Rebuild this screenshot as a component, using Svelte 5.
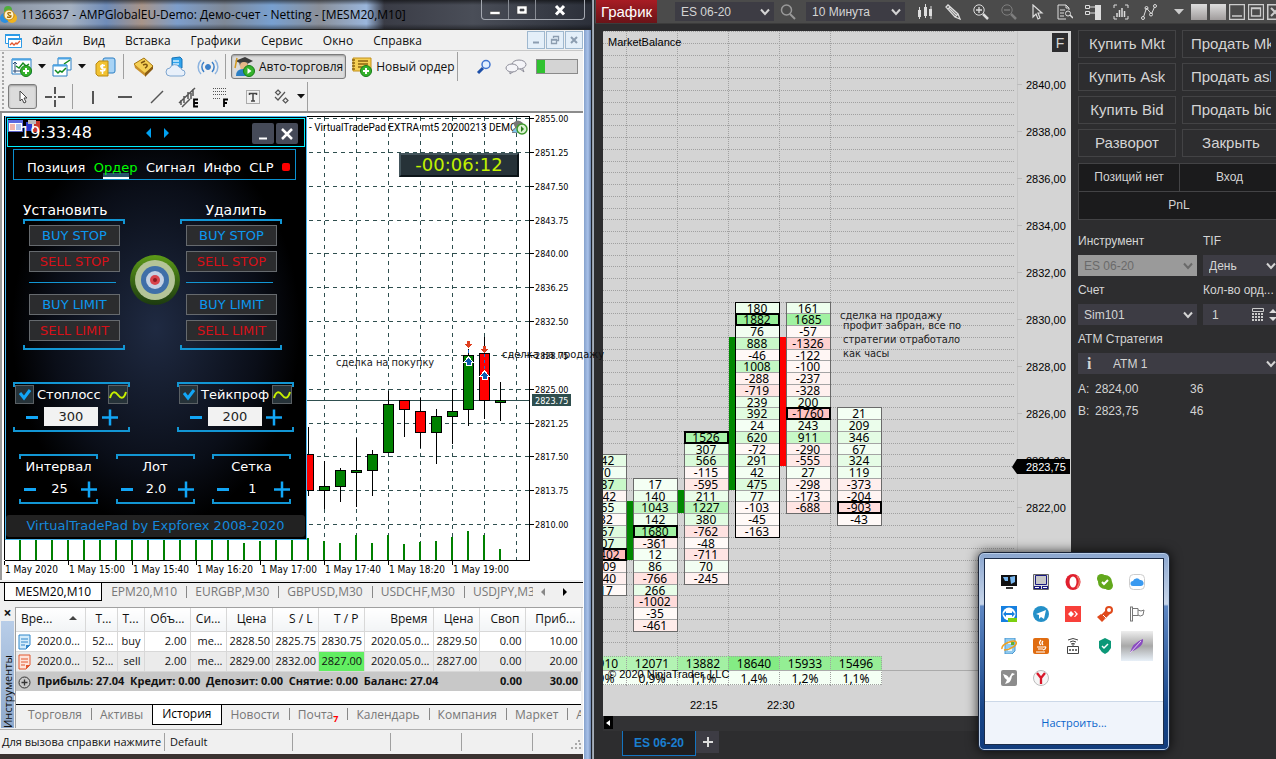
<script>
  const menu = ['Файл', 'Вид', 'Вставка', 'Графики', 'Сервис', 'Окно', 'Справка'];
  const symbols = ['EPM20,M10', 'EURGBP,M30', 'GBPUSD,M30', 'USDCHF,M30'];

  // price chart: [x, high, low, body top, body bottom, up]
  const candles = [
    [308, 427, 496, 454, 490, false],
    [324, 461, 509, 486, 490, true],
    [340, 468, 502, 470, 486, true],
    [356, 438, 507, 470, 472, true],
    [372, 450, 496, 454, 470, true],
    [388, 391, 452, 404, 452, true],
    [404, 400, 437, 400, 409, false],
    [420, 398, 448, 411, 432, false],
    [436, 409, 464, 416, 432, true],
    [452, 389, 444, 411, 416, true],
    [468, 349, 426, 355, 409, true],
    [484, 337, 419, 353, 400, false],
    [500, 382, 421, 400, 402, true]
  ];
  const volumes = [538, 538, 538, 538, 538, 538, 538, 538, 538, 538, 538, 538, 538, 538, 543, 541, 538, 538, 538, 541, 543, 535, 543, 535, 544, 542, 541, 537, 531, 535, 549];
  const gridY = [118, 152, 186, 220, 253, 287, 321, 355, 389, 423, 456, 490, 524];
  const gridX = [324, 356, 388, 420, 452, 484, 516];
  const times = ['1 May 2020', '1 May 15:00', '1 May 15:40', '1 May 16:20', '1 May 17:00', '1 May 17:40', '1 May 18:20', '1 May 19:00'];
  const priceAt = i => (2855 - i * 3.75).toFixed(2);

  const padTabs = ['Позиция', 'Ордер', 'Сигнал', 'Инфо', 'CLP'];
  const orderTypes = ['BUY STOP', 'SELL STOP', 'BUY LIMIT', 'SELL LIMIT'];
  const limits = [
    { name: 'Стоплосс', value: '300' },
    { name: 'Тейкпроф', value: '200' }
  ];
  const steppers = [
    { name: 'Интервал', value: '25' },
    { name: 'Лот', value: '2.0' },
    { name: 'Сетка', value: '1' }
  ];

  const head = ['Т...', 'Т...', 'Объ...', 'Си...', 'Цена', 'S / L', 'T / P', 'Время', 'Цена', 'Своп', 'Приб...'];
  const deals = [
    { color: '#2f86c9', fill: '#d4ecfb', cells: ['2020.0...', '52...', 'buy', '2.00', 'me...', '2828.50', '2825.75', '2830.75', '2020.05.0...', '2829.50', '0.00', '10.00'] },
    { color: '#e2562f', fill: '#fde3da', hit: true, cells: ['2020.0...', '52...', 'sell', '2.00', 'me...', '2829.00', '2832.00', '2827.00', '2020.05.0...', '2827.00', '0.00', '20.00'] }
  ];
  const colWidths = [69, 32, 27, 46, 36, 46, 46, 46, 69, 46, 46, 56];

  // footprint columns: x, first row index, values top to bottom, max row
  const clusters = [
    { x: 582, row: 36, max: 8, vals: [342, 70, 887, -142, 165, -32, 467, 407, -3402, -209, -340, -17] },
    { x: 633, row: 38, max: 4, vals: [17, 140, 1043, 142, 1680, -361, 12, 86, -766, 266, -1002, -35, -461] },
    { x: 684, row: 34, max: 0, vals: [1526, 307, 566, -115, -595, 211, 1227, 380, -762, -48, -711, 70, -245] },
    { x: 735, row: 23, max: 1, dark: true, vals: [180, 1882, 76, 888, -46, 1008, -288, -719, 239, 392, 24, 620, -72, 291, 42, 475, 77, -103, -45, -163] },
    { x: 786, row: 23, max: 9, vals: [161, 1685, -57, -1326, -122, -100, -237, -328, 200, -1760, 243, 911, -290, -555, 27, -298, -173, -688] },
    { x: 837, row: 32, max: 8, vals: [21, 209, 346, 67, 324, 119, -373, -204, -903, -43] }
  ];
  const moves = [
    { x: 627, from: 40, to: 45, color: '#080' },
    { x: 678, from: 39, to: 41, color: '#080' },
    { x: 729, from: 26, to: 39, color: '#080' },
    { x: 780, from: 26, to: 37, color: '#f00' }
  ];
  const totals = [
    { x: 575, v: '11910', p: '0,9%', c: '#b6f3b6' },
    { x: 626, v: '12071', p: '0,9%', c: '#b3f3b3' },
    { x: 677, v: '13882', p: '1,1%', c: '#a3f0a3' },
    { x: 728, v: '18640', p: '1,4%', c: '#84ec84' },
    { x: 779, v: '15933', p: '1,2%', c: '#94ee94' },
    { x: 830, v: '15496', p: '1,1%', c: '#97ee97' }
  ];
  const rowY = k => Math.round(31.3 + k * 11.75);
  const rows = Array.from({ length: 53 }, (_, k) => rowY(k));
  const prices = Array.from({ length: 10 }, (_, k) => ({ y: 85 + k * 47, text: `${2840 - k * 2},00` }));

  function heat(v) {
    const t = Math.min(1, Math.abs(v) / 2000);
    if (v > 0) return `rgb(${245 - 100 * t}, ${255 - 16 * t}, ${245 - 100 * t})`;
    return `rgb(255, ${250 - 62 * t}, ${248 - 60 * t})`;
  }

  const orderButtons = ['Купить Mkt', 'Продать Mkt', 'Купить Ask', 'Продать ask', 'Купить Bid', 'Продать bid', 'Разворот', 'Закрыть'];
</script>

{#snippet chevron()}
  <svg class="chev" width="10" height="8" viewBox="0 0 10 8"><path d="M1 1.5 5 6l4-4.5" fill="none" stroke="currentColor" stroke-width="2" /></svg>
{/snippet}

{#snippet caret()}
  <svg class="caret" width="8" height="5" viewBox="0 0 8 5"><path d="M0 0h8L4 4.5z" fill="#111" /></svg>
{/snippet}

{#snippet minus()}
  <button class="pm" aria-label="Меньше"><svg width="18" height="18" viewBox="0 0 18 18"><path d="M3 9.5h12" stroke="#12a6f6" stroke-width="3" /></svg></button>
{/snippet}

{#snippet plus()}
  <button class="pm" aria-label="Больше"><svg width="18" height="18" viewBox="0 0 18 18"><path d="M1 9.5h16M9 1.500v16" stroke="#12a6f6" stroke-width="2.500" /></svg></button>
{/snippet}

<div class="desktop">
  <section class="mt">
    <header class="titlebar">
      <svg width="17" height="18" viewBox="0 0 17 18"><circle cx="8" cy="4" r="4" fill="#4fae3c" /><circle cx="5" cy="12" r="5" fill="#2b8fe0" /><circle cx="12" cy="12" r="5" fill="#f0b21e" /><circle cx="9" cy="9" r="5" fill="#fff2c8" stroke="#c98a12" /><path d="M11 7q-4-1-3 1t3 2q0 2-4 1" fill="none" stroke="#a66a00" stroke-width="1.300" /></svg>
      <h1>1136637 - AMPGlobalEU-Demo: Демо-счет - Netting - [MESM20,M10]</h1>
      <div class="caption">
        <button aria-label="Свернуть"><svg width="12" height="12" viewBox="0 0 12 12"><path d="M1 7.500h10v3H1z" fill="#fff" stroke="#444" stroke-width=".6" /></svg></button>
        <button aria-label="Развернуть"><svg width="12" height="12" viewBox="0 0 12 12"><path d="M1 2h10v8H1zM4 5v2h4V5z" fill="#fff" fill-rule="evenodd" stroke="#444" stroke-width=".6" /></svg></button>
        <button class="wide" aria-label="Закрыть"><svg width="14" height="12" viewBox="0 0 14 12"><path d="m3 2 8 8.500M11 2l-8 8.500" stroke="#fff" stroke-width="3" /></svg></button>
      </div>
    </header>

    <nav class="menubar">
      <svg width="17" height="17" viewBox="0 0 17 17"><path d="M.5 2.500h14v9H.5z" fill="#fff" stroke="#2e9be6" /><path d="M0 2h15v2H0z" fill="#2e9be6" /><path d="M3.500 6.500h13v9h-13z" fill="#fff" stroke="#2e9be6" /><path d="M3 6h14v2H3z" fill="#2e9be6" /><path d="m5 13 2-2 2 2 2-2 1 1 3-3" fill="none" stroke="#e2562f" stroke-width="1.300" /></svg>
      {#each menu as item}
        <button>{item}</button>
      {/each}
      <div class="mdi">
        <button aria-label="Свернуть окно"><svg width="10" height="10" viewBox="0 0 10 10"><path d="M2 7.500h6" stroke="#8c9db0" stroke-width="2" /></svg></button>
        <button aria-label="Восстановить окно"><svg width="10" height="10" viewBox="0 0 10 10"><path d="M3.500 3V1.500h5v4H7M1.500 4.500h5v4h-5zM1 5h6" fill="none" stroke="#8c9db0" stroke-width="1.300" /></svg></button>
        <button aria-label="Закрыть окно"><svg width="10" height="10" viewBox="0 0 10 10"><path d="m2 2 6 6M8 2 2 8" stroke="#8c9db0" stroke-width="2" /></svg></button>
      </div>
    </nav>

    <div class="toolbar">
      <button class="tool drop" aria-label="Новый график">
        <svg width="22" height="22" viewBox="0 0 22 22"><path d="M1 3h19v15H1z" fill="#fff" stroke="#2b7fc4" /><path d="M1 2.500h19v2H1z" fill="#4da4e4" /><path d="M4 17V6m-2 2 2-2 2 2M2 15h14" fill="none" stroke="#2a4d78" /><path d="m5 10 3 2 4-5 3 3 3-2" fill="none" stroke="#128a1c" stroke-width="1.500" /><circle cx="15" cy="15" r="5.500" fill="#35b22c" stroke="#167d18" /><path d="M15 12v6M12 15h6" stroke="#fff" stroke-width="2" /></svg>
        {@render caret()}
      </button>
      <button class="tool drop" aria-label="Профили">
        <svg width="22" height="22" viewBox="0 0 22 22"><path d="M7 2h13v12H7z" fill="#fff" stroke="#2b7fc4" /><path d="M7 1.500h13v2H7z" fill="#4da4e4" /><path d="m13 8 3-2 3-2" fill="none" stroke="#128a1c" stroke-width="1.500" /><path d="M2 9h14v11H2z" fill="#fff" stroke="#2b7fc4" /><path d="M2 8.500h14v2H2z" fill="#4da4e4" /><path d="m4 14 3 3 2-2 2 1 4-4" fill="none" stroke="#128a1c" stroke-width="1.500" /></svg>
        {@render caret()}
      </button>
      <button class="tool" aria-label="Обзор рынка">
        <svg width="22" height="22" viewBox="0 0 22 22"><rect x="8" y="2" width="12" height="15" rx="2" fill="#a8d3f5" stroke="#2b7fc4" /><path d="m1 8 3-3h9v15H3l-2-2z" fill="#f1c232" stroke="#b98a12" /><path d="M10 9.500q-5-1-4 1.500t4 2q0 3-5 1.500M7.500 8v10" fill="none" stroke="#fff" stroke-width="1.500" /></svg>
      </button>
      <span class="sep"></span>
      <button class="tool" aria-label="История">
        <svg width="22" height="22" viewBox="0 0 22 22"><path d="m1 8 10-6 9 8-8 9z" fill="#f5cf55" stroke="#a67610" /><path d="m1 8 11 9v3L2 12z" fill="#c9912a" /><path d="m12 17 8-7v3l-8 8z" fill="#8b5d14" /><path d="m8 7 4-2m-2 4c4-2 6 1 2 3" fill="none" stroke="#7d5510" stroke-width="1.500" /></svg>
      </button>
      <button class="tool" aria-label="Облако">
        <svg width="22" height="22" viewBox="0 0 22 22"><path d="m7 2 8-1 2 2v9H7z" fill="#2fa3ec" stroke="#1673b8" /><path d="M8 5h6M8 8h6" stroke="#d4efff" stroke-width="1.500" /><path d="M5 20a4 4 0 0 1 0-8 5 5 0 0 1 9-1 4 4 0 0 1 3 3 3 3 0 0 1 0 6z" fill="#e8f0fa" stroke="#7fa6d0" /></svg>
      </button>
      <button class="tool" aria-label="Сигналы">
        <svg width="22" height="22" viewBox="0 0 22 22" fill="none" stroke="#3b7fc9"><circle cx="11" cy="11" r="2.500" fill="#3b7fc9" /><path d="M7 6a7 7 0 0 0 0 10M15 6a7 7 0 0 1 0 10" stroke-width="1.500" /><path d="M4 4a10 10 0 0 0 0 14M18 4a10 10 0 0 1 0 14" stroke="#8db4e0" stroke-width="1.500" /></svg>
      </button>
      <span class="sep"></span>
      <button class="tool labelled pressed">
        <svg width="22" height="22" viewBox="0 0 22 22"><path d="m1 5 10-4 8 4-8 4z" fill="#3a3a3a" /><path d="M5 6h9v4q-4 3-8 0z" fill="#555" /><circle cx="10" cy="10" r="4" fill="#e8b888" /><path d="M2 20q0-7 7-7t7 7z" fill="#2b7fc4" /><path d="M3 2 1 12" stroke="#d49a20" stroke-width="1.500" /><circle cx="15" cy="15" r="5.500" fill="#35b22c" stroke="#167d18" /><path d="m13.500 12 4 3-4 3z" fill="#fff" /></svg>
        Авто-торговля
      </button>
      <button class="tool labelled">
        <svg width="22" height="22" viewBox="0 0 22 22"><path d="M2 2h18v13H2z" fill="#f5cf55" stroke="#c2901a" /><path d="M1 4h3M1 7h3M1 10h3M1 13h3M7 5h10M7 8h10M7 11h7" stroke="#8c6410" stroke-width="1.300" /><circle cx="15" cy="15" r="5.500" fill="#35b22c" stroke="#167d18" /><path d="M15 12v6M12 15h6" stroke="#fff" stroke-width="2" /></svg>
        Новый ордер
      </button>
      <span class="sep end"></span>
      <div class="right-tools">
        <button class="tool" aria-label="Поиск"><svg width="16" height="16" viewBox="0 0 16 16"><path d="m2 14 5-5" stroke="#1d4fa8" stroke-width="3" /><circle cx="10" cy="5.500" r="4" fill="#e2f0ff" stroke="#3f74d0" stroke-width="1.500" /></svg></button>
        <button class="tool" aria-label="Чат"><svg width="22" height="16" viewBox="0 0 22 16" fill="#f4f4f8" stroke="#8c8c98"><path d="m17 8 2 5-5-4" /><ellipse cx="14" cy="5.500" rx="7" ry="4.500" /><path d="m5 12 0 3 4-3" /><ellipse cx="7" cy="9" rx="6" ry="4" /></svg></button>
        <div class="load"><span></span></div>
      </div>
    </div>

    <div class="toolbar second">
      <button class="tool pressed square" aria-label="Курсор"><svg width="12" height="16" viewBox="0 0 12 16"><path d="M3 2v10l2-2 2 4 2-1-2-4h3z" fill="#fff" stroke="#444" /></svg></button>
      <button class="tool" aria-label="Перекрестие"><svg width="22" height="22" viewBox="0 0 22 22"><path d="M11 1v7m0 6v7M1 11h7m6 0h7M10 11h2" stroke="#555" stroke-width="2" /></svg></button>
      <span class="sep"></span>
      <div class="lines">
        <button class="tool" aria-label="Вертикальная линия"><svg width="22" height="22" viewBox="0 0 22 22"><path d="M11 5v13" stroke="#555" stroke-width="2" /></svg></button>
        <button class="tool" aria-label="Горизонтальная линия"><svg width="22" height="22" viewBox="0 0 22 22"><path d="M4 11h14" stroke="#555" stroke-width="2" /></svg></button>
        <button class="tool" aria-label="Трендовая линия"><svg width="22" height="22" viewBox="0 0 22 22"><path d="M5 17 17 5" stroke="#555" stroke-width="1.500" /></svg></button>
        <button class="tool" aria-label="Канал"><svg width="22" height="22" viewBox="0 0 22 22"><path d="M1 17 17 2M4 21l8-8M6 10v7m4-11v7m5-10v7M3 14v5m10-12v6" stroke="#555" stroke-width="1.500" /><path d="M20 13.500h-4v7h4M16 17h4" fill="none" stroke="#000" stroke-width="1.800" /></svg></button>
        <button class="tool" aria-label="Фибоначчи"><svg width="22" height="22" viewBox="0 0 22 22"><path d="M3 2.500h14M3 5.500h14M3 8.500h14M3 12.500h8" stroke="#555" stroke-dasharray="1 1" /><path d="M18 13.500h-4V21M14 17h3" fill="none" stroke="#000" stroke-width="1.800" /></svg></button>
        <button class="tool" aria-label="Текст"><svg width="22" height="22" viewBox="0 0 22 22"><path d="M4.500 4.500h13v13h-13z" fill="none" stroke="#666" stroke-dasharray="1 1" /><path d="M7.500 9V7.500h7V9M11 7.500V15M9 15h4" fill="none" stroke="#444" stroke-width="1.500" /></svg></button>
        <button class="tool drop" aria-label="Объекты"><svg width="22" height="22" viewBox="0 0 22 22"><path d="m8 4 2.500 2.500L8 9 5.500 6.500zM15.500 12l2.500 2.500-2.500 2.500-2.500-2.500zM5 11l3 3 7-8" fill="none" stroke="#555" stroke-width="1.200" /></svg>{@render caret()}</button>
      </div>
      <span class="sep tall"></span>
    </div>

    <div class="chart">
      <svg class="plot" width="583" height="467" viewBox="0 113 583 467" shape-rendering="crispEdges">
        {#each gridY as y, i}
          <path d="M5 {y}.5H529" class="grid" />
          <path d="M530 {y}.5h4" stroke="#000" />
          <text class="price" x="535" y={y + 4}>{priceAt(i)}</text>
        {/each}
        {#each gridX as x}
          <path d="M{x}.5 117V560" class="grid" />
        {/each}
        {#each volumes as top, i}
          <rect x={19 + i * 16} y={top} width="2" height={560 - top} fill="#008000" />
        {/each}
        <path d="M5 400.500h525" stroke="#2f4f4f" />
        {#each candles as [x, hi, lo, top, bottom, up]}
          <path d="M{x}.5 {hi}V{lo}" stroke="#000" />
          <rect x={x - 4.5} y={top + 0.5} width="10" height={bottom - top} fill={up ? '#008000' : '#f00'} stroke="#000" />
        {/each}
        <path d="M468.500 350v12M484.500 354v24" stroke="#1f6fd0" stroke-dasharray="3 3" />
        {#each [[468, 344], [484, 349]] as [x, y]}
          <path d="M{x - 3} {y}h2v-3h3v3h2l-3.500 4z" fill="#e04020" />
        {/each}
        {#each [[468, 362], [484, 376]] as [x, y]}
          <path d="M{x - 4} {y}l4.500-5 4.500 5h-2v3h-5v-3z" fill="#0a5ab0" stroke="#fff" />
        {/each}
        <path d="M4.500 560V116.500H529.500V560.500H4.500" fill="none" stroke="#000" />
        {#each times as t, i}
          <path d="M{4 + i * 64}.5 561v4" stroke="#000" />
          <text x={5 + i * 64} y="573">{t}</text>
        {/each}
        <rect x="532" y="394" width="39" height="12" fill="#2f4f4f" />
        <text class="price" x="535" y="404" fill="#fff">2823.75</text>
        <text class="expert" x="309" y="131">- VirtualTradePad EXTRA mt5 20200213 DEMO</text>
        <text class="note" x="336" y="366">сделка на покупку</text>
        <g shape-rendering="auto"><path d="M513 123q5-5 10 0l-2 4h-6zM512 133q0-6 7-6t6 6z" fill="#777" /><path d="m512 132 5-5 4 6z" fill="#7fc4ee" /><circle cx="522" cy="129" r="5" fill="#d9f0d0" stroke="#3f9a2c" stroke-width="1.500" /><path d="m521 126 3 3-3 3z" fill="#2c7d1c" /></g>
      </svg>
      <div class="countdown">-00:06:12</div>
      <div class="note over">сделка на продажу</div>

      <div class="pad">
        <div class="pad-head">
          <svg width="36" height="15" viewBox="0 0 36 15"><path d="M.5 1.500h14v11H.5z" fill="#fff" stroke="#5a62c8" /><path d="M0 1h15v3H0z" fill="#5a6ae0" /><path d="M2 6h5M2 8h5M2 10h5" stroke="#e26a5a" /><path d="M8 6h5M8 8h5M8 10h5" stroke="#5a8ae0" /><path d="M18 3h7v9h-7z" fill="#2a3ad0" /><path d="M25 2h7v11h-7z" fill="#c8382c" /><path d="M20 1h8v4h-8z" fill="#bbb" /><path d="M25 5v5" stroke="#ddd" stroke-width="2" /></svg>
          <time>19:33:48</time>
          <svg class="arrows" width="24" height="10" viewBox="0 0 24 10" fill="#00a2f2"><path d="M5 0v10L0 5zM18 0v10l5-5z" /></svg>
          <div class="pad-win"><button aria-label="Свернуть панель"><svg width="10" height="14" viewBox="0 0 10 14"><path d="M1 11.500h8" stroke="#fff" stroke-width="2" /></svg></button><button aria-label="Закрыть панель"><svg width="14" height="14" viewBox="0 0 14 14"><path d="m2 2 10 10M12 2 2 12" stroke="#fff" stroke-width="2.500" /></svg></button></div>
        </div>
        <div class="pad-tabs">
          {#each padTabs as tab}
            <button class:current={tab === 'Ордер'}>{tab}</button>
          {/each}
          <span class="rec"></span>
        </div>
        <div class="orders">
          {#each ['Установить', 'Удалить'] as title, i}
            <div class="order-col" class:second-col={i === 1}>
              <h2>{title}</h2>
              <div class="bracket order-box">
                {#each orderTypes as type, n}
                  <button class="order" class:sell={n % 2}>{type}</button>
                  {#if n === 1}<hr />{/if}
                {/each}
              </div>
            </div>
          {/each}
          <svg class="target" width="50" height="50" viewBox="0 0 50 50">
            <defs><linearGradient id="ring" x2="0" y2="1"><stop stop-color="#5c9a18" /><stop offset="1" stop-color="#1c3a10" /></linearGradient></defs>
            <circle cx="25" cy="25" r="25" fill="url(#ring)" /><circle cx="25" cy="25" r="20" fill="#b4c498" /><circle cx="25" cy="25" r="14" fill="#3f6fa8" /><circle cx="25" cy="25" r="9" fill="#c4d2e4" /><circle cx="25" cy="25" r="5" fill="#d8444c" /><circle cx="25" cy="25" r="2" fill="#8a1a20" />
          </svg>
        </div>
        <div class="limits">
          {#each limits as l}
            <div class="bracket limit">
              <div class="limit-row">
                <label class="tick"><span class="box"><input type="checkbox" checked /><svg width="14" height="12" viewBox="0 0 14 12"><path d="m2 4 4 5 6-8" fill="none" stroke="#12a6f6" stroke-width="3" /></svg></span>{l.name}</label>
                <button class="wave" aria-label="Трейлинг {l.name}"><svg width="18" height="12" viewBox="0 0 18 12"><path d="M1 9C3 2 6 2 9 6s6 4 8-3" fill="none" stroke="#c8f000" stroke-width="2" /></svg></button>
              </div>
              <div class="limit-row values">
                {@render minus()}
                <input type="text" aria-label={l.name} value={l.value} />
                {@render plus()}
              </div>
            </div>
          {/each}
        </div>
        <div class="steppers">
          {#each steppers as s, i}
            <div class="bracket stepper">
              <label for="step{i}">{s.name}</label>
              <div class="step-row">
                {@render minus()}
                <input id="step{i}" type="text" value={s.value} />
                {@render plus()}
              </div>
            </div>
          {/each}
        </div>
        <footer>VirtualTradePad by Expforex 2008-2020</footer>
      </div>
    </div>

    <div class="symbols">
      <button class="active">MESM20,M10</button>
      {#each symbols as s}
        <button>{s}</button>
      {/each}
      <button class="cut">USDJPY,M30</button>
      <svg width="36" height="10" viewBox="0 0 36 10"><path d="M8 1v8L4 5z" fill="#888" /><path d="M26 1v8l4-4z" fill="#000" /></svg>
    </div>

    <div class="terminal">
      <aside><button aria-label="Закрыть панель инструментов">×</button><span>Инструменты</span></aside>
      <div class="history">
        <table>
          <colgroup>
            {#each colWidths as w}
              <col style="width: {w}px" />
            {/each}
          </colgroup>
          <thead>
            <tr>
              <th class="first">Вре... <svg width="8" height="4" viewBox="0 0 8 4"><path d="M0 4h8L4 0z" fill="#444" /></svg></th>
              {#each head as h}
                <th>{h}</th>
              {/each}
            </tr>
          </thead>
          <tbody>
            {#each deals as d}
              <tr>
                {#each d.cells as c, i}
                  <td class:hit={d.hit && i === 7}>
                    {#if i === 0}<svg class="sheet" width="13" height="16" viewBox="0 0 13 16"><path d="M1 1h11v10l-4 4H1z" fill={d.fill} stroke={d.color} /><path d="M3 5h7M3 8h7M3 11h4" stroke={d.color} /><path d="m12 11-4 4v-4z" fill={d.color} /></svg>{/if}{c}
                  </td>
                {/each}
              </tr>
            {/each}
          </tbody>
          <tfoot>
            <tr>
              <td colspan="10" class="sum"><svg width="13" height="13" viewBox="0 0 13 13"><circle cx="6.500" cy="6.500" r="5.500" fill="none" stroke="#333" /><path d="M6.500 3.500v6M3.500 6.500h6" stroke="#333" stroke-width="1.300" /></svg>Прибыль: 27.04&nbsp; Кредит: 0.00&nbsp; Депозит: 0.00&nbsp; Снятие: 0.00&nbsp; Баланс: 27.04</td>
              <td>0.00</td>
              <td>30.00</td>
            </tr>
          </tfoot>
        </table>
        <div class="panels">
          <button>Торговля</button>
          <button>Активы</button>
          <button class="active">История</button>
          <button>Новости</button>
          <button>Почта<sub>7</sub></button>
          <button>Календарь</button>
          <button>Компания</button>
          <button>Маркет</button>
          <button>Алерты</button>
        </div>
      </div>
    </div>

    <div class="status">
      <span class="help">Для вызова справки нажмите</span>
      <span class="profile">Default</span>
      <span class="c98"></span>
      <span></span>
      <span></span>
      <span class="rest"><svg width="10" height="10" viewBox="0 0 10 10"><path d="M8 0v2M4 4h2M8 4h2M0 8h2M4 8h2M8 8h2" stroke="#aaa" stroke-width="2" /></svg></span>
    </div>
  </section>

  <section class="nt">
    <header class="nt-head">
      <h2>График</h2>
      <label class="select"><select aria-label="Инструмент графика"><option>ES 06-20</option></select>{@render chevron()}</label>
      <svg class="find" width="16" height="16" viewBox="0 0 16 16"><circle cx="6.500" cy="6" r="5" fill="none" stroke="#999" stroke-width="1.500" /><path d="m10 10 5 5" stroke="#999" stroke-width="2" /></svg>
      <label class="select"><select aria-label="Интервал графика"><option>10 Минута</option></select>{@render chevron()}</label>
      <div class="nt-tools">
        <button aria-label="Стиль"><svg viewBox="0 0 16 16"><path d="M2.500 3v12M8.500 0v14M14 2v13" stroke="#ddd" /><path d="M1 6h3v7H1zM7 3h3v9H7zM12 5h3v7h-3z" fill="#ddd" /></svg></button>
        <button aria-label="Рисование"><svg viewBox="0 0 16 16"><path d="m1 3 2-2 10 9 2 5-5-2zM3 5l2-2M4 4l8 8M10 13l3-3" fill="none" stroke="#ddd" stroke-width="1.300" /></svg></button>
        <button aria-label="Увеличить"><svg viewBox="0 0 16 16"><circle cx="6" cy="6" r="5.200" fill="none" stroke="#ddd" /><path d="M6 3v6M3 6h6" stroke="#ddd" stroke-width="1.300" /><path d="m10 10 5 5" stroke="#ddd" stroke-width="2.500" /></svg></button>
        <button aria-label="Уменьшить"><svg viewBox="0 0 16 16" opacity=".35"><circle cx="6" cy="6" r="5.200" fill="none" stroke="#ddd" /><path d="M3 6h6" stroke="#ddd" stroke-width="1.300" /><path d="m10 10 5 5" stroke="#ddd" stroke-width="2.500" /></svg></button>
        <button aria-label="Указатель"><svg viewBox="0 0 16 16"><path d="M4 1v12l3-3 2 5 2-1-2-5h4z" fill="none" stroke="#ddd" stroke-width="1.200" /></svg></button>
        <button aria-label="Данные"><svg viewBox="0 0 16 16"><path d="M9 15H1V1h8l3 3v2M9 1v3h3M3 6h5M3 9h4M3 12h4" fill="none" stroke="#ddd" /><circle cx="11" cy="9.500" r="2.500" fill="none" stroke="#ddd" /><path d="m13 11 3 3" stroke="#ddd" stroke-width="1.500" /></svg></button>
        <button aria-label="Трейдер"><svg viewBox="0 0 16 16"><path d="M10 1h6v15h-6z" fill="#ddd" /><path d="M.5 1.500h4v3h-4zM.5 7.500h4v3h-4zM5 3h5M5 9h5" fill="none" stroke="#ddd" /></svg></button>
        <button aria-label="Индикаторы"><svg viewBox="0 0 16 16"><path d="M1 4V1h3M12 1h3v3M1 12v3h3M12 15h3v-3" fill="none" stroke="#ddd" /><path d="M4 13V9M6.500 13V6M9 13V4M11.500 13V7" stroke="#ddd" stroke-width="1.500" /></svg></button>
        <button aria-label="Стратегии"><svg viewBox="0 0 16 16" fill="none" stroke="#ddd"><path d="m2.500 13 3-9 5 6 3-7" /><circle cx="2" cy="14" r="1.500" /><circle cx="5.500" cy="4" r="1.500" /><circle cx="10" cy="10.500" r="1.500" /><circle cx="14" cy="2" r="1.500" /></svg></button>
      </div>
      <svg class="more" width="10" height="6" viewBox="0 0 10 6"><path d="M0 0h10L5 5.500z" fill="#ccc" /></svg>
      <div class="nt-win">
        <i></i><i></i>
        <button aria-label="Свернуть"><svg viewBox="0 0 16 16"><path d="M.5.5h15v15H.5zM3 12h10" fill="none" stroke="#ccc" stroke-width="1.500" /></svg></button>
        <button aria-label="Развернуть"><svg viewBox="0 0 16 16"><path d="M.5.5h15v15H.5zM3.500 4h9v8h-9zM3 4.500h10" fill="none" stroke="#ccc" stroke-width="1.300" /></svg></button>
        <button aria-label="Закрыть"><svg viewBox="0 0 16 16"><path d="M.5.5h15v15H.5zM4 4l8 8M12 4l-8 8" fill="none" stroke="#ccc" stroke-width="2" /></svg></button>
      </div>
    </header>

    <div class="nt-body">
      <div class="nt-left">
        <div class="nt-chart">
          <svg class="foot" height="685" shape-rendering="crispEdges">
            {#each rows as y}
              <line x1="0" x2="100%" y1={y - 30.5} y2={y - 30.5} class="dots" />
            {/each}
            <line x1="0" x2="100%" y1="639.500" y2="639.500" stroke="#aaa" />
            <g transform="translate(-603 -31)">
              {#each [626, 677, 728, 779, 830] as x}
                <path d="M{x}.5 31V686" class="dots" />
              {/each}
              <text class="ar" x="608" y="46">MarketBalance</text>
              {#each clusters as c}
                {#each c.vals as v, i}
                  <rect x={c.x + 0.5} y={rowY(c.row + i) + 0.5} width="44" height={rowY(c.row + i + 1) - rowY(c.row + i)} fill={heat(v)} stroke="#a4a4a4" />
                  <text class="num" x={c.x + 22} y={rowY(c.row + i) + 11}>{v}</text>
                {/each}
                <rect x={c.x + 0.5} y={rowY(c.row) + 0.5} width="44" height={rowY(c.row + c.vals.length) - rowY(c.row)} fill="none" stroke={c.dark ? '#000' : '#6a6a6a'} />
                <rect x={c.x + 1} y={rowY(c.row + c.max) + 1} width="43" height="11" fill="none" stroke="#000" stroke-width="2" />
              {/each}
              {#each moves as m}
                <rect x={m.x} y={rowY(m.from)} width="6" height={rowY(m.to) - rowY(m.from)} fill={m.color} />
              {/each}
              {#each totals as t}
                <rect x={t.x} y="656" width="52" height="14" fill={t.c} />
                <rect x={t.x} y="671" width="52" height="14" fill="#f4fff4" />
                <path d="M{t.x}.5 656.500h51v28h-51z" class="dots" fill="none" />
                <text class="num" x={t.x + 26} y="668">{t.v}</text>
                <text class="num" x={t.x + 26} y="683">{t.p}</text>
              {/each}
              <text class="ar" x="608" y="678">© 2020 NinjaTrader, LLC</text>
              <text class="ar" x="690" y="709">22:15</text>
              <text class="ar" x="767" y="709">22:30</text>
              <text class="note" x="840" y="319">сделка на продажу</text>
              <text class="note" x="843" y="329">профит забран, все по</text>
              <text class="note" x="843" y="343">стратегии отработало</text>
              <text class="note" x="843" y="357">как часы</text>
            </g>
          </svg>
          <svg class="axis" width="56" height="685" viewBox="1015 31 56 685">
            <path d="M1017.500 31V687" stroke="#c6c6c6" />
            {#each prices as p}
              <path d="M1017 {p.y - 0.5}h5" stroke="#bbb" />
              <text class="ar" x="1026" y={p.y + 4}>{p.text}</text>
            {/each}
            <path d="m1012 467 5-8h53v15h-53z" fill="#000" />
            <text class="ar" x="1026" y="471" fill="#fff">2823,75</text>
          </svg>
          <button class="fixed-scale">F</button>
        </div>
        <div class="scroll"><button aria-label="Прокрутить влево"><svg width="4" height="6" viewBox="0 0 4 6"><path d="M4 0v6L0 3z" fill="#fff" /></svg></button></div>
        <div class="nt-tabs">
          <button class="active">ES 06-20</button>
          <button class="add" aria-label="Добавить вкладку"><svg width="12" height="12" viewBox="0 0 12 12"><path d="M6 1v10M1 6h10" stroke="#ddd" stroke-width="2" /></svg></button>
        </div>
      </div>

      <div class="trader">
        <div class="buttons">
          {#each orderButtons as b}
            <button><span>{b}</span></button>
          {/each}
        </div>
        <div class="position">
          <div>Позиций нет</div>
          <div>Вход</div>
          <div class="pnl">PnL</div>
        </div>
        <div class="fields">
          <label for="instr">Инструмент</label>
          <label for="tif">TIF</label>
          <div class="select off"><select id="instr" disabled><option>ES 06-20</option></select>{@render chevron()}</div>
          <div class="select"><select id="tif"><option>День</option></select>{@render chevron()}</div>
          <label for="acc">Счет</label>
          <label for="qty">Кол-во орд...</label>
          <div class="select"><select id="acc"><option>Sim101</option></select>{@render chevron()}</div>
          <div class="qty">
            <input id="qty" type="text" value="1" />
            <svg width="12" height="13" viewBox="0 0 12 13"><path d="M.5.5h11v3H.5z" fill="none" stroke="#ccc" /><path d="M0 6h12M0 9h12M0 12h12" stroke="#ccc" stroke-width="2" stroke-dasharray="2 1" /></svg>
            <svg width="8" height="14" viewBox="0 0 8 14"><path d="m0 5 4-4 4 4zM0 9l4 4 4-4z" fill="#ddd" /></svg>
          </div>
          <label class="full" for="atm">ATM Стратегия</label>
          <div class="select full atm"><select id="atm"><option>ATM 1</option></select><b>i</b>{@render chevron()}</div>
        </div>
        <dl>
          <dt>A:</dt><dd>2824,00</dd><dd>36</dd>
          <dt>B:</dt><dd>2823,75</dd><dd>46</dd>
        </dl>
      </div>
    </div>
  </section>

  <div class="tray">
    <div class="tray-in">
      <div class="tray-icons">
        <svg viewBox="0 0 16 16"><path d="M0 1h16v11H0z" fill="#111" /><path d="M2 3h5v4H4zM9 3l5-1v6l-4 2z" fill="#7ab8f0" /><path d="M5 13h7v2H5z" fill="#333" /></svg>
        <svg viewBox="0 0 16 16"><path d="M.5.500h15v15H.5z" fill="#ddd" stroke="#666" /><path d="M2.500 1.500h11v9h-11z" fill="#c8c8c8" stroke="#1a1a80" /><path d="M1 12h7v3H1zM9 12h6v3H9z" fill="#1a1a80" /><path d="M2 13h4v1H2zM10 13h4v1h-4z" fill="#fff" /></svg>
        <svg viewBox="0 0 16 16"><ellipse cx="8" cy="8" rx="7.500" ry="8" fill="#e0202e" /><path d="M12 2q5 5 0 12" fill="none" stroke="#f07a6a" stroke-width="1.500" /><ellipse cx="8" cy="8" rx="3.500" ry="5.500" fill="#fff" /></svg>
        <svg viewBox="0 0 16 16"><circle cx="8" cy="8" r="7" fill="#62a81c" /><circle cx="4.500" cy="4.500" r="4.500" fill="#62a81c" /><circle cx="11.500" cy="11.500" r="4.500" fill="#62a81c" /><path d="m5 8 2 2 4-4" fill="none" stroke="#fff" stroke-width="2" /></svg>
        <svg viewBox="0 0 16 16"><rect x=".5" y=".5" width="15" height="15" rx="4" fill="#fff" stroke="#ccc" /><path d="M4 12a2.500 2.500 0 0 1 0-5 4 4 0 0 1 7-1 3 3 0 0 1 1 6z" fill="#3a9af0" /></svg>
        <svg viewBox="0 0 16 16"><path d="M0 0h16v16H0z" fill="#1680e0" /><circle cx="8" cy="8" r="6.500" fill="#fff" /><path d="m2 8 3-3v2h6V5l3 3-3 3V9H5v2z" fill="#1680e0" /><path d="M7 12h9v4H7z" fill="#7cd010" /></svg>
        <svg viewBox="0 0 16 16"><circle cx="8" cy="8" r="8" fill="#2490c8" /><path d="m3 8 10-4-2 9-3-2-2 2V9z" fill="#fff" /></svg>
        <svg viewBox="0 0 16 16"><path d="M0 0h16v16H0z" fill="#f8403a" /><path d="m6 5 3 3-3 3-3-3zM9 5h1l3 3-3 3H9l2-3z" fill="#fff" /></svg>
        <svg viewBox="0 0 16 16"><path d="m4 9 6-6 4 4-6 6z" fill="#e04a1c" /><path d="m0 11 4-3 4 5-3 3z" fill="#e04a1c" /><circle cx="12" cy="4" r="3" fill="#fff" stroke="#e04a1c" stroke-width="2" /><path d="m6 9 3 3" stroke="#fff" /></svg>
        <svg viewBox="0 0 16 16"><path d="M1.500 1v14M3.500 1v14M1 1h3M1 15h3M4 2.500h5v7H4M9 4q3 2 6 0l-1 5q-3 2-5 0" fill="none" stroke="#777" /></svg>
        <svg viewBox="0 0 16 16"><path d="M4 0h10v13l-3 3H4z" fill="#8fcaf0" stroke="#4c98d0" /><path d="M7 3h3v3H7zM7 10h4v3H7z" fill="#e8f6ff" /><path d="M10 4h3v3h-3z" fill="#60b030" /><path d="M1 11C0 6 13 1 15 4s-6 8-12 8" fill="none" stroke="#f0a020" stroke-width="1.500" /></svg>
        <svg viewBox="0 0 16 16"><rect width="16" height="16" rx="2" fill="#e06c10" /><path d="M8 2q-3 3 0 5M10 3q-2 2 0 4M4 9h7q3-1 1 2l-2 1M5 11h5M3 14h9" fill="none" stroke="#fff" stroke-width="1.200" /></svg>
        <svg viewBox="0 0 16 16"><path d="M2.500 8.500h11v7h-11zM8 5v4M5 4q3-2 6 0M3 2q5-3 10 0M6 6q2-1 4 0" fill="none" stroke="#444" /><path d="M5 11v2M8 11v2M11 11v2" stroke="#444" stroke-width="1.500" /></svg>
        <svg viewBox="0 0 16 16"><path d="m8 0 6 3v7q-2 4-6 6-4-2-6-6V3z" fill="#0c9878" /><path d="m5 8 2 2 4-4" fill="none" stroke="#fff" stroke-width="1.500" /></svg>
        <svg class="hot" viewBox="-8 -7 32 30"><path d="M1 15Q3 5 14 1q1 5-5 9-4 3-6 3z" fill="#8a4cc0" /><path d="M1 15 12 3" stroke="#e4ccf6" /></svg>
        <svg viewBox="0 0 16 16"><rect width="16" height="16" rx="2" fill="#8c8c8c" /><path d="M2 4q5 1 6 4l3-5 3 1-3 2q-1 6-4 7l-3 1 2-4Q3 8 2 4z" fill="#fff" /></svg>
        <svg viewBox="0 0 16 16"><circle cx="8" cy="8" r="7.500" fill="#f6f6f6" stroke="#bbb" /><path d="m4 3 4 5v6M12 3 8 8" fill="none" stroke="#d8182a" stroke-width="2.300" /></svg>
      </div>
      <a href="#settings">Настроить...</a>
    </div>
  </div>
</div>

<style>
:global(body) {
  margin: 0;
  background: #2d2d2f;
}
button, select, input {
  font: inherit;
  color: inherit;
  margin: 0;
  padding: 0;
  border: none;
  background: none;
  border-radius: 0;
  outline: none;
  box-sizing: border-box;
}
button {
  white-space: nowrap;
  cursor: default;
}
svg {
  display: block;
  flex: none;
}
h1, h2, dl, dd, hr {
  margin: 0;
}
.desktop {
  position: relative;
  display: grid;
  grid-template-columns: 595fr 681fr;
  min-height: 100vh;
  overflow: hidden;
}

/* terminal window */
.mt {
  display: flex;
  flex-direction: column;
  min-width: 0;
  box-sizing: border-box;
  padding: 0 12px 5px 0;
  background: linear-gradient(to left, #2d2d2f 1px, #b0b8c2 1px, #8a94a0 3px, #20242c 3px, #20242c 4px, #6c86b0 4px, #a9c2ea 7px, #86a2cc 11px, #fff 11px, #fff 12px, #3a3230 12px);
  font-family: "Open Sans", "Noto Sans", sans-serif;
  font-size: 12px;
  color: #111;
}
.titlebar {
  display: flex;
  align-items: center;
  height: 29px;
  margin-right: -8px;
  border-bottom: 1px solid #222;
  background: linear-gradient(#0008, #0000 5px, #0000 24px, #0006), linear-gradient(90deg, #8b95a4, #a4b0c0 12%, #6f8cb8 18%, #a89488 24%, #7d9ecb 30%, #7f8896 38%, #78a0d0 46%, #8a8f98 54%, #9ab6dc 62%, #3a3c46 65%, #4a4e58 80%, #2c303a);
}
.titlebar h1 {
  flex: 1;
  margin-left: 4px;
  font-size: 12px;
  font-weight: 400;
  white-space: nowrap;
  color: #000;
}
.caption {
  display: flex;
  align-self: flex-start;
  height: 19px;
  margin-right: 6px;
  border: 1px solid #a4a8b0;
  border-top: none;
  border-radius: 0 0 4px 4px;
}
.caption button {
  display: flex;
  align-items: center;
  justify-content: center;
  width: 27px;
  border-right: 1px solid #888c94;
}
.caption .wide {
  width: 48px;
  border: none;
}
.menubar {
  display: flex;
  align-items: center;
  height: 21px;
  padding-left: 5px;
  background: #f0f0f0;
  border-bottom: 1px solid #c8c8c8;
  box-sizing: border-box;
}
.menubar > button {
  padding: 0 10px;
}
.mdi {
  display: flex;
  gap: 1px;
  margin-left: auto;
}
.mdi button {
  display: flex;
  align-items: center;
  justify-content: center;
  width: 18px;
  height: 18px;
  border: 1px solid #9fb8cf;
  background: #e4eff9;
}
.toolbar {
  display: flex;
  align-items: center;
  height: 31px;
  padding-left: 8px;
  box-sizing: border-box;
  background: radial-gradient(circle, #a8a8a8 1px, transparent 1px) 1px 0 / 4px 4px repeat-y, #f0f0f0;
}
.toolbar.second {
  border-bottom: 2px solid #8c8c8c;
}
.tool {
  display: flex;
  flex: none;
  align-items: center;
  justify-content: center;
  margin-left: 3px;
  min-width: 29px;
  height: 25px;
}
.tool.drop {
  gap: 5px;
  margin-right: 2px;
}
.tool.labelled {
  gap: 3px;
  padding: 0 2px;
}
.pressed {
  border: 1px solid #7c7c7c;
  border-radius: 3px;
  background: #dcdcdc;
  box-shadow: inset 0 1px 2px #999;
}
.tool.square {
  margin-left: 0;
}
.sep {
  flex: none;
  width: 1px;
  height: 25px;
  margin: 0 2px 0 3px;
  background: #a0a0a0;
}
.sep.end {
  height: 29px;
  margin: 0;
}
.sep.tall {
  height: 29px;
  margin: 0;
}
.right-tools {
  display: flex;
  align-items: center;
  margin-left: auto;
  padding-right: 5px;
}
.load {
  flex: none;
  width: 40px;
  height: 13px;
  margin-left: 6px;
  border: 1px solid #8a8a8a;
  background: #d4d4d4;
}
.load span {
  display: block;
  width: 8px;
  height: 13px;
  background: #2fc22f;
}
.lines {
  display: flex;
  flex: none;
}

.chart {
  position: relative;
  height: 467px;
  background: #fff;
  box-shadow: inset 2px 0 #9a9a9a;
}
.plot text {
  font: 10px "DejaVu Sans Condensed", "DejaVu Sans", sans-serif;
}
.plot .price {
  font-size: 9px;
}
.plot .expert {
  font: 10px "Roboto", sans-serif;
}
.grid {
  stroke: #2f4f4f;
  stroke-dasharray: 4 4;
}
.plot .note, .note {
  font: 11px "DejaVu Sans Condensed", "DejaVu Sans", sans-serif;
  fill: #222;
}
.note.over {
  position: absolute;
  left: 502px;
  top: 235px;
  white-space: nowrap;
  z-index: 3;
}
.countdown {
  position: absolute;
  left: 399px;
  top: 40px;
  width: 120px;
  height: 24px;
  box-sizing: border-box;
  border: 2px solid #0c1418;
  border-top-color: #44555c;
  border-left-color: #44555c;
  background: #263238;
  color: #c0f000;
  font: 18px/20px "DejaVu Sans", sans-serif;
  text-align: center;
}

/* trade pad */
.pad {
  position: absolute;
  left: 5px;
  top: 3px;
  width: 302px;
  height: 424px;
  box-sizing: border-box;
  border: 1px solid #4cb8f0;
  background: radial-gradient(ellipse 160px 220px at 50% 50%, #1f2a42, #0a0e18 65%, #000 90%);
  color: #fff;
  font-family: "DejaVu Sans", sans-serif;
  font-size: 13px;
}
.pad-head {
  display: flex;
  margin: 1px;
  height: 27px;
  border: 1px solid #00f0ff;
  background: #000;
}
.pad-head time {
  margin-left: -24px;
  font-size: 16px;
  line-height: 27px;
}
.arrows {
  margin: 9px 0 0 54px;
}
.pad-win {
  display: flex;
  gap: 2px;
  margin: 4px 6px 0 auto;
}
.pad-win button {
  display: flex;
  align-items: center;
  justify-content: center;
  width: 22px;
  height: 21px;
  border-radius: 2px;
  background: #454a58;
}
.pad-tabs {
  display: flex;
  align-items: center;
  justify-content: space-between;
  height: 29px;
  margin: 2px 10px 0 7px;
  padding: 0 5px 0 13px;
  border: 1px solid #0a90d0;
}
.pad-tabs button {
  height: 29px;
  padding-top: 5px;
}
.pad-tabs .current {
  color: #0f0;
  background: linear-gradient(#fff, #fff) 50% 100% / 26px 2px no-repeat, linear-gradient(#28546c, #28546c) 50% 100% / 26px 6px no-repeat;
}
.rec {
  width: 8px;
  height: 8px;
  margin-top: 5px;
  border-radius: 2px;
  background: #f00;
}
.orders {
  position: relative;
  display: flex;
  justify-content: space-between;
  padding: 21px 24px 0 17px;
}
.order-col {
  width: 102px;
}
.order-col h2 {
  font-size: 14px;
  font-weight: 400;
  line-height: 18px;
}
.second-col h2 {
  text-align: center;
  padding-left: 10px;
}
.bracket {
  --c: #1296d4;
  box-sizing: border-box;
  background:
    linear-gradient(var(--c), var(--c)) 0 0 / 100% 2px,
    linear-gradient(var(--c), var(--c)) 0 100% / 100% 2px,
    linear-gradient(var(--c), var(--c)) 0 0 / 2px 5px,
    linear-gradient(var(--c), var(--c)) 100% 0 / 2px 5px,
    linear-gradient(var(--c), var(--c)) 0 100% / 2px 5px,
    linear-gradient(var(--c), var(--c)) 100% 100% / 2px 5px;
  background-repeat: no-repeat;
}
.order-box {
  display: flex;
  flex-direction: column;
  gap: 5px;
  height: 131px;
  padding: 6px 5px 0 6px;
}
.order {
  height: 21px;
  border: 1px solid #666a6e;
  background: #2b2c2e;
  color: #0c98f0;
}
.order.sell {
  color: #d81018;
}
.order-box hr {
  flex: none;
  border: none;
  height: 1px;
  margin: 5px 4px 6px 0;
  background: #1296d4;
}
.target {
  position: absolute;
  left: 124px;
  top: 75px;
}
.limits {
  display: flex;
  justify-content: space-between;
  padding: 32px 12px 0 7px;
}
.limit {
  width: 117px;
  height: 50px;
  padding: 3px 2px 0;
}
.limit-row {
  display: flex;
  justify-content: space-between;
}
.tick {
  display: flex;
  align-items: center;
  gap: 3px;
}
.box {
  display: grid;
  place-items: center;
  width: 17px;
  height: 17px;
  border: 1px solid #5a6064;
  background: #263238;
}
.box > * {
  grid-area: 1 / 1;
}
.box input {
  appearance: none;
  width: 17px;
  height: 17px;
}
.wave {
  border: 1px solid #5a6064;
  background: #263238;
}
.limit-row.values {
  justify-content: flex-start;
  align-items: center;
  gap: 3px;
  margin-top: 3px;
  padding-left: 8px;
}
.values input {
  width: 54px;
  height: 19px;
  text-align: center;
  background: #f2f2f2;
  color: #222;
}
.steppers {
  display: flex;
  justify-content: space-between;
  padding: 22px 15px 0 13px;
}
.stepper {
  width: 79px;
  height: 50px;
  padding-top: 4px;
  text-align: center;
}
.stepper label {
  display: block;
  line-height: 18px;
}
.step-row {
  display: flex;
  justify-content: space-between;
  align-items: center;
  padding: 3px 0 0 2px;
}
.step-row input {
  width: 36px;
  height: 19px;
  text-align: center;
}
.pad footer {
  margin: 11px 1px 0 0;
  border-radius: 3px;
  background: #222;
  color: #1488dc;
  line-height: 22px;
  text-align: center;
}

.symbols {
  display: flex;
  align-items: flex-start;
  height: 25px;
  padding: 3px 10px 0 4px;
  box-sizing: border-box;
  background: linear-gradient(#000, #000) 0 2px / 100% 1px no-repeat, #f0f0f0;
  color: #777;
}
.symbols button {
  flex: none;
  padding: 0 9px;
  line-height: 17px;
}
.symbols button + button + button, .panels button:not(.active) + button:not(.active) {
  background: linear-gradient(#888, #888) 0 3px / 1px 12px no-repeat;
}
.symbols .active {
  padding: 0 10px;
  border: 1px solid #000;
  border-top: none;
  background: #fff;
  color: #000;
}
.symbols .cut {
  flex: 1;
  min-width: 0;
  overflow: hidden;
  padding-right: 0;
  margin-right: 4px;
  text-align: left;
}
.symbols svg {
  margin-top: 4px;
}

.terminal {
  display: flex;
  height: 123px;
  padding-bottom: 1px;
  background: #f0f0f0;
}
aside {
  display: flex;
  flex-direction: column;
  align-items: center;
  width: 15px;
}
aside button {
  height: 16px;
  font-size: 14px;
  font-weight: 700;
  line-height: 14px;
}
aside span {
  flex: 1;
  width: 13px;
  padding-bottom: 2px;
  box-sizing: border-box;
  writing-mode: vertical-rl;
  transform: rotate(180deg);
  text-align: left;
  font-size: 11px;
  line-height: 13px;
  background: linear-gradient(#8fa9cc, #b8cde8);
}
.history {
  flex: 1;
  min-width: 0;
  display: flex;
  flex-direction: column;
  margin-top: 2px;
  padding-right: 2px;
  border-left: 1px solid #a0a0a0;
  border-top: 1px solid #a0a0a0;
}
table {
  width: 100%;
  table-layout: fixed;
  border-collapse: collapse;
}
th, td {
  height: 20px;
  padding: 0 3px;
  box-sizing: border-box;
  border-right: 1px solid #d8d8d8;
  border-bottom: 1px solid #d8d8d8;
  background: #fff;
  font-size: 11px;
  font-weight: 400;
  line-height: 18px;
  text-align: right;
  white-space: nowrap;
  overflow: hidden;
}
th {
  height: 23px;
  padding: 0 5px;
  background: linear-gradient(#fff, #f2f4f6);
  font-size: 12px;
}
th.first {
  text-align: left;
}
.first svg {
  display: inline-block;
  margin: 0 0 3px 14px;
}
td:first-child {
  text-align: left;
}
tbody tr:nth-child(2) td {
  background: #ebebeb;
}
tbody tr td.hit:nth-child(8) {
  background: #62ee62;
}
.sheet, .sum svg {
  display: inline-block;
  margin: 0 6px 0 -1px;
  vertical-align: middle;
}
tfoot td {
  border: none;
  background: #c8c8c8;
  font-weight: 700;
}
.panels {
  display: flex;
  flex: 1;
  align-items: flex-start;
  margin-top: 13px;
  padding-left: 3px;
  overflow: hidden;
  border-top: 1px solid #000;
  box-shadow: 0 -13px #fff;
  color: #777;
}
.panels button {
  flex: none;
  padding: 0 9px;
  line-height: 20px;
}
.panels .active {
  margin-top: -1px;
  border: 1px solid #000;
  border-top: none;
  background: #fff;
  color: #000;
}
.panels sub {
  color: #f00;
  font-size: 9px;
  font-weight: 700;
  line-height: 9px;
}
.status {
  display: flex;
  align-items: center;
  height: 25px;
  border-top: 1px solid #b0b0b0;
  box-sizing: border-box;
  background: #f0f0f0;
}
.status span {
  width: 71px;
  height: 18px;
  box-sizing: border-box;
  border-right: 1px solid #a0a0a0;
  line-height: 18px;
  white-space: nowrap;
  overflow: hidden;
}
.status .help {
  width: 165px;
  padding-left: 2px;
  font-size: 11px;
}
.status .profile {
  width: 128px;
  padding-left: 5px;
  font-size: 11px;
}
.status .c98 {
  width: 98px;
}
.status .rest {
  flex: 1;
  border: none;
}
.rest svg {
  margin: 7px 2px 0 auto;
}

/* ninja window */
.nt {
  display: flex;
  flex-direction: column;
  min-width: 0;
  overflow: hidden;
  background: #2d2d2f;
  color: #d4d4d4;
  font-family: "Liberation Sans", Arial, sans-serif;
  font-size: 12px;
}
.nt-head {
  display: flex;
  align-items: center;
  height: 23px;
  padding-left: 1px;
  border-bottom: 1px solid #3c3c3c;
  background: #4b4b4b;
}
.nt-head > * {
  flex: none;
}
.nt-head h2 {
  width: 61px;
  margin-right: 18px;
  background: linear-gradient(#a81c24, #6a1418);
  color: #fff;
  font-size: 15px;
  font-weight: 400;
  line-height: 23px;
  text-align: center;
}
.select {
  display: grid;
  align-items: center;
  background: #3d3c44;
}
.select > * {
  grid-area: 1 / 1;
}
.select select {
  appearance: none;
  width: 100%;
  height: 21px;
  padding-left: 6px;
  font-size: 12px;
}
.select .chev {
  justify-self: end;
  margin-right: 4px;
  pointer-events: none;
}
.nt-head .select {
  width: 99px;
  height: 19px;
}
.nt-head .select select {
  height: 19px;
}
.find {
  margin: 0 10px 0 6px;
}
.nt-tools {
  display: flex;
  gap: 12px;
  margin-left: 12px;
}
.nt-tools svg, .nt-win svg {
  width: 16px;
  height: 16px;
}
.more {
  margin-left: 17px;
}
.nt-win {
  display: flex;
  gap: 3px;
  margin-left: 7px;
}
.nt-win i {
  width: 16px;
  height: 16px;
  background: linear-gradient(#ddd, #a09c9c);
}
.nt-body {
  display: flex;
  padding: 7px 0 0 8px;
}
.nt-left {
  flex: 1;
  min-width: 0;
}
.nt-chart {
  position: relative;
  display: flex;
  background: #d4d4d4;
}
.foot {
  flex: 1;
  min-width: 0;
}
.axis {
  overflow: visible;
}
.dots {
  stroke: #a0a0a0;
  stroke-dasharray: 1 1;
}
.ar {
  font: 11px "Liberation Sans", Arial, sans-serif;
}
.num {
  font: 12px "Noto Sans", sans-serif;
  text-anchor: middle;
}
.fixed-scale {
  position: absolute;
  right: 3px;
  top: 2px;
  width: 16px;
  height: 19px;
  background: #2d2d2f;
  font-size: 14px;
}
.scroll {
  height: 15px;
  background: #323234;
}
.scroll button {
  display: block;
  width: 9px;
  height: 13px;
  margin: 0 0 0 1px;
  padding-left: 2px;
  background: #000;
}
.nt-tabs {
  display: flex;
  padding-left: 19px;
}
.nt-tabs button {
  height: 22px;
}
.nt-tabs .active {
  width: 74px;
  height: 25px;
  border: 1px solid #1474c0;
  border-top: none;
  background: #1e1e20;
  color: #1b7fd0;
  font-weight: 700;
}
.nt-tabs .add {
  display: flex;
  align-items: center;
  justify-content: center;
  width: 23px;
  background: #3d3c44;
}
.trader {
  width: 198px;
  padding-left: 7px;
  box-sizing: content-box;
}
.buttons {
  display: grid;
  grid-template-columns: 98px 98px;
  gap: 5px 6px;
  margin-top: -1px;
}
.buttons button {
  height: 28px;
  border: 1px solid #434345;
  font-size: 15px;
}
.buttons span {
  display: inline-block;
  max-width: 80px;
  overflow: hidden;
  vertical-align: top;
  line-height: 24px;
}
.position {
  display: grid;
  grid-template-columns: 100px 99px;
  gap: 1px;
  width: 202px;
  margin-top: 6px;
  padding: 1px;
  box-sizing: border-box;
  background: #434345;
  font-size: 12px;
  line-height: 27px;
  text-align: center;
}
.position div {
  background: #1b1b1c;
}
.position .pnl {
  grid-column: span 2;
}
.fields {
  display: grid;
  grid-template-columns: 119px 77px;
  column-gap: 6px;
  margin-top: 7px;
}
.fields label {
  height: 28px;
  font-size: 12px;
  line-height: 29px;
}
.fields .full {
  grid-column: span 2;
}
.off {
  background: #9a9a9a;
  color: #6a6a6a;
}
.off select {
  opacity: 1;
}
.atm select {
  padding-left: 35px;
}
.atm b {
  margin-left: 9px;
  font-family: "Liberation Serif", serif;
  font-size: 16px;
  line-height: 20px;
  pointer-events: none;
  width: 8px;
}
.qty {
  display: flex;
  align-items: center;
  gap: 5px;
  padding-left: 9px;
  background: #3d3c44;
}
.qty input {
  width: 35px;
  height: 21px;
}
dl {
  display: grid;
  grid-template-columns: 17px 95px 1fr;
  margin-top: 4px;
  font-size: 12px;
  line-height: 22px;
}

/* notification area flyout */
.tray {
  position: absolute;
  right: 106px;
  bottom: 8px;
  width: 192px;
  height: 199px;
  box-sizing: border-box;
  padding: 5px;
  border: 1px solid #1a2438;
  border-radius: 6px;
  background: linear-gradient(#8ba6cf, #c8d6ea 26%, #5f88c4 27%, #164488 80%, #123c7c);
  box-shadow: inset 0 0 0 1px #b8cce6, 0 0 12px #000c;
}
.tray-in {
  display: flex;
  flex-direction: column;
  height: 100%;
  box-sizing: border-box;
  border: 1px solid #1c2c48;
  background: #fff;
}
.tray-icons {
  display: grid;
  grid-template-columns: repeat(5, 32px);
  grid-auto-rows: 32px;
  place-items: center;
  flex: 1;
  align-content: start;
  padding: 7px 0 0 8px;
}
.tray-icons svg {
  width: 16px;
  height: 16px;
}
.tray-icons .hot {
  width: 32px;
  height: 30px;
  background: linear-gradient(#eee, #a8a8a8 50%, #e8f0f8);
}
.tray a {
  border-top: 1px solid #ccd8e8;
  background: #f0f4fb;
  color: #0a66cc;
  font: 11px/42px "Open Sans", sans-serif;
  text-align: center;
  text-decoration: none;
}
</style>
